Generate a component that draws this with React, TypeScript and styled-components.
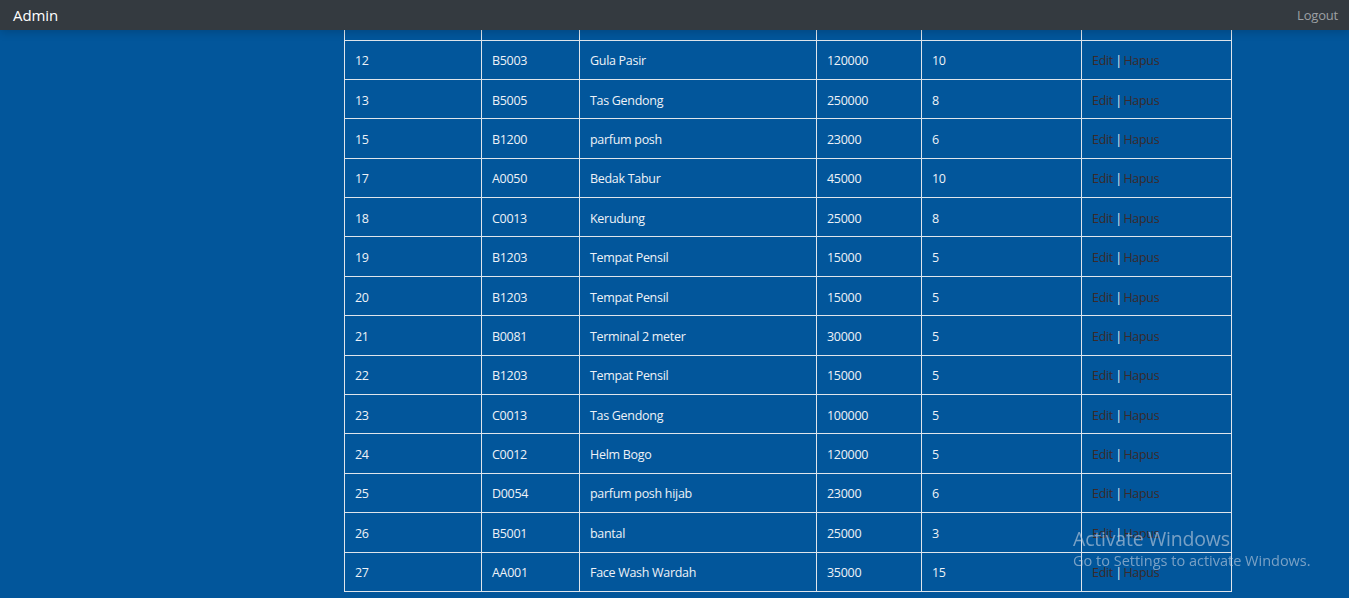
import React from "react"
import styled, { createGlobalStyle } from "styled-components"

const rows = [
  ["12", "B5003", "Gula Pasir", "120000", "10"],
  ["13", "B5005", "Tas Gendong", "250000", "8"],
  ["15", "B1200", "parfum posh", "23000", "6"],
  ["17", "A0050", "Bedak Tabur", "45000", "10"],
  ["18", "C0013", "Kerudung", "25000", "8"],
  ["19", "B1203", "Tempat Pensil", "15000", "5"],
  ["20", "B1203", "Tempat Pensil", "15000", "5"],
  ["21", "B0081", "Terminal 2 meter", "30000", "5"],
  ["22", "B1203", "Tempat Pensil", "15000", "5"],
  ["23", "C0013", "Tas Gendong", "100000", "5"],
  ["24", "C0012", "Helm Bogo", "120000", "5"],
  ["25", "D0054", "parfum posh hijab", "23000", "6"],
  ["26", "B5001", "bantal", "25000", "3"],
  ["27", "AA001", "Face Wash Wardah", "35000", "15"],
]

const widths = [137, 98, 237, 105, 160, 150]

export default function App() {
  return (
    <>
      <GlobalStyle />
      <Navbar>
        <Brand>Admin</Brand>
        <NavLink href="#">Logout</NavLink>
      </Navbar>
      <Main>
        <Spacer />
        <Table>
          <colgroup>
            {widths.map((w, i) => (
              <col key={i} style={{ width: w }} />
            ))}
          </colgroup>
          <tbody>
            <CutRow>
              {widths.map((_, i) => (
                <td key={i} />
              ))}
            </CutRow>
            {rows.map((r) => (
              <Row key={r[0]}>
                {r.map((c, i) => (
                  <Cell key={i}>{c}</Cell>
                ))}
                <Cell>
                  <Action href="#">Edit</Action>
                  <Sep> | </Sep>
                  <Action href="#">Hapus</Action>
                </Cell>
              </Row>
            ))}
          </tbody>
        </Table>
      </Main>
      <Watermark>
        <WmTitle>Activate Windows</WmTitle>
        <WmText>Go to Settings to activate Windows.</WmText>
      </Watermark>
    </>
  )
}

const GlobalStyle = createGlobalStyle`
  html, body {
    margin: 0;
    height: 100%;
    overflow: hidden;
    background: #02569b;
    font-family: "Open Sans", "Noto Sans", sans-serif;
  }
`

const Navbar = styled.nav`
  position: relative;
  z-index: 2;
  height: 30px;
  background: #343a40;
  display: flex;
  align-items: center;
  justify-content: space-between;
  padding: 0 11px 0 13px;
  box-shadow: 0 2px 10px rgba(0, 0, 0, 0.18);
`

const Brand = styled.span`
  color: #fff;
  font-size: 15px;
  letter-spacing: -0.1px;
`

const NavLink = styled.a`
  color: #9da0a4;
  font-size: 13px;
  text-decoration: none;
  letter-spacing: -0.2px;
`

const Main = styled.div`
  display: flex;
`

const Spacer = styled.div`
  width: 344px;
  flex: none;
`

const Table = styled.table`
  border-collapse: collapse;
  table-layout: fixed;
  width: 888px;
  border: 1px solid #dfe5ec;
  border-top: none;
  color: #eef2f7;
  font-size: 12.5px;
  letter-spacing: -0.3px;

  td {
    border: 1px solid #dfe5ec;
  }
`

const CutRow = styled.tr`
  height: 10px;
  td {
    border-top: none;
  }
`

const Row = styled.tr`
  height: 39.4px;
`

const Cell = styled.td`
  padding: 2px 10px 0;
  vertical-align: middle;
  white-space: nowrap;
`

const Action = styled.a`
  color: #3b2a2a;
  text-decoration: none;
`

const Sep = styled.span`
  color: #e8edf3;
  letter-spacing: -1px;
`

const Watermark = styled.div`
  position: fixed;
  left: 1073px;
  top: 527px;
  color: rgba(200, 210, 225, 0.6);
  pointer-events: none;
`

const WmTitle = styled.div`
  font-size: 19.5px;
  line-height: 24px;
  letter-spacing: -0.2px;
`

const WmText = styled.div`
  font-size: 14.5px;
  line-height: 20px;
  letter-spacing: 0;
`
